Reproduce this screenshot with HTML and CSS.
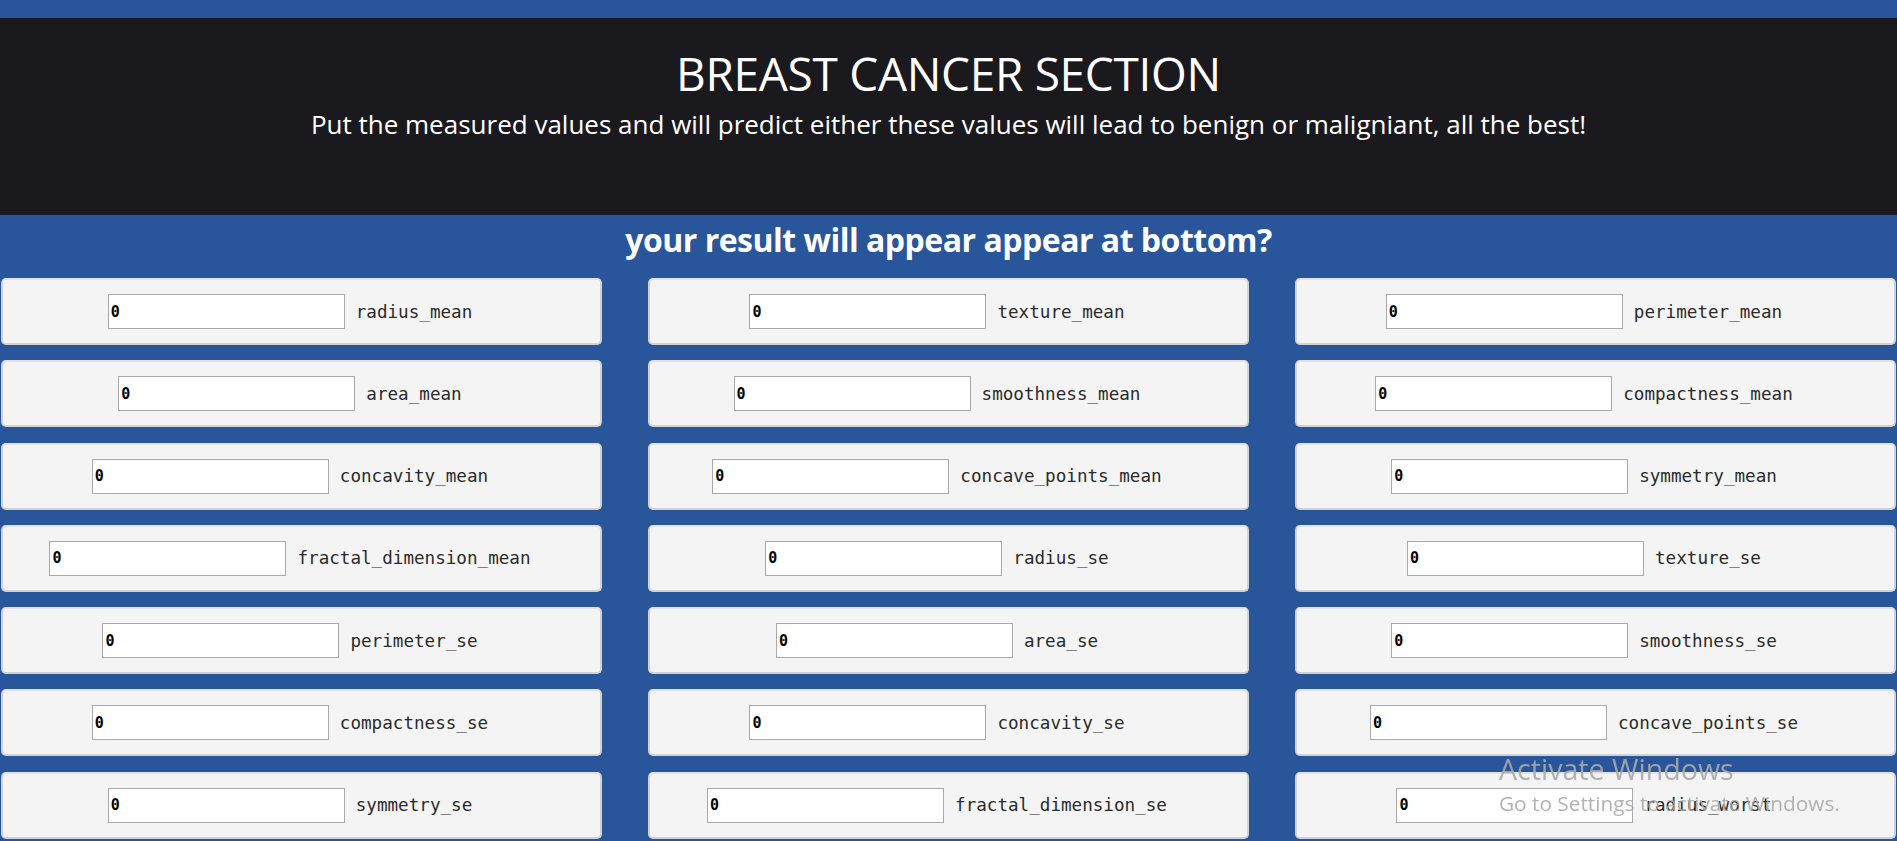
FILE: index.html
```html
<!DOCTYPE html>
<html lang="en">
<head>
<meta charset="utf-8">
<title>Breast Cancer Section</title>
<link rel="stylesheet" href="styles.css">
</head>
<body>
<div class="page">
  <header class="hero">
    <h1 class="hero-title">BREAST CANCER SECTION</h1>
    <p class="hero-sub">Put the measured values and will predict either these values will lead to benign or maligniant, all the best!</p>
  </header>
  <h2 class="result-note">your result will appear appear at bottom?</h2>
  <form class="grid">
    <div class="card"><input class="field" type="text" value="0"><span class="label">radius_mean</span></div>
    <div class="card"><input class="field" type="text" value="0"><span class="label">texture_mean</span></div>
    <div class="card"><input class="field" type="text" value="0"><span class="label">perimeter_mean</span></div>
    <div class="card"><input class="field" type="text" value="0"><span class="label">area_mean</span></div>
    <div class="card"><input class="field" type="text" value="0"><span class="label">smoothness_mean</span></div>
    <div class="card"><input class="field" type="text" value="0"><span class="label">compactness_mean</span></div>
    <div class="card"><input class="field" type="text" value="0"><span class="label">concavity_mean</span></div>
    <div class="card"><input class="field" type="text" value="0"><span class="label">concave_points_mean</span></div>
    <div class="card"><input class="field" type="text" value="0"><span class="label">symmetry_mean</span></div>
    <div class="card"><input class="field" type="text" value="0"><span class="label">fractal_dimension_mean</span></div>
    <div class="card"><input class="field" type="text" value="0"><span class="label">radius_se</span></div>
    <div class="card"><input class="field" type="text" value="0"><span class="label">texture_se</span></div>
    <div class="card"><input class="field" type="text" value="0"><span class="label">perimeter_se</span></div>
    <div class="card"><input class="field" type="text" value="0"><span class="label">area_se</span></div>
    <div class="card"><input class="field" type="text" value="0"><span class="label">smoothness_se</span></div>
    <div class="card"><input class="field" type="text" value="0"><span class="label">compactness_se</span></div>
    <div class="card"><input class="field" type="text" value="0"><span class="label">concavity_se</span></div>
    <div class="card"><input class="field" type="text" value="0"><span class="label">concave_points_se</span></div>
    <div class="card"><input class="field" type="text" value="0"><span class="label">symmetry_se</span></div>
    <div class="card"><input class="field" type="text" value="0"><span class="label">fractal_dimension_se</span></div>
    <div class="card"><input class="field" type="text" value="0"><span class="label">radius_worst</span></div>
  </form>
</div>
<div class="watermark">
  <div class="wm-title">Activate Windows</div>
  <div class="wm-sub">Go to Settings to activate Windows.</div>
</div>
</body>
</html>
```

FILE: styles.css
```css
html, body {
  margin: 0;
  padding: 0;
}

body {
  background: #29569a;
  font-family: "Open Sans", "Noto Sans", sans-serif;
  overflow: hidden;
}

.page {
  padding-top: 18px;
}

.hero {
  background: #1a191e;
  height: 197px;
  box-sizing: border-box;
  padding-top: 27px;
  text-align: center;
  color: #ffffff;
}

.hero-title {
  margin: 0;
  font-size: 46px;
  font-weight: 400;
  line-height: 56px;
  letter-spacing: -0.3px;
}

.hero-sub {
  margin: 6px 0 0;
  font-size: 26px;
  line-height: 34px;
  letter-spacing: 0;
}

.result-note {
  margin: 0;
  padding: 6px 0 19px;
  text-align: center;
  color: #ffffff;
  font-size: 32px;
  line-height: 38px;
  font-weight: 700;
  letter-spacing: -0.5px;
}

.grid {
  display: grid;
  grid-template-columns: repeat(3, 601px);
  column-gap: 46px;
  row-gap: 15.3px;
  padding-left: 1px;
  margin: 0;
}

.card {
  height: 67px;
  box-sizing: border-box;
  display: flex;
  align-items: center;
  justify-content: center;
  padding-right: 23px;
  background: #f4f4f4;
  border: 2px solid #d2d2d2;
  border-top-color: #e2e2e2;
  border-radius: 5px;
}

.field {
  width: 237px;
  height: 35px;
  box-sizing: border-box;
  margin: 0;
  padding: 0 2px;
  border: 1px solid #a9a9a9;
  border-radius: 0;
  background: #ffffff;
  font-family: "DejaVu Sans Mono", monospace;
  font-weight: 700;
  font-size: 15px;
  color: #000000;
}

.label {
  margin-left: 11px;
  font-family: "DejaVu Sans Mono", "Liberation Mono", monospace;
  font-size: 17.6px;
  color: #2b2b2b;
  white-space: nowrap;
}

.watermark {
  position: fixed;
  left: 1499px;
  top: 750px;
  color: rgba(170, 170, 170, 0.9);
  font-family: "Open Sans", "Noto Sans", sans-serif;
  pointer-events: none;
}

.wm-title {
  font-size: 28.6px;
  line-height: 38px;
}

.wm-sub {
  font-size: 20.8px;
  line-height: 30px;
}
```
